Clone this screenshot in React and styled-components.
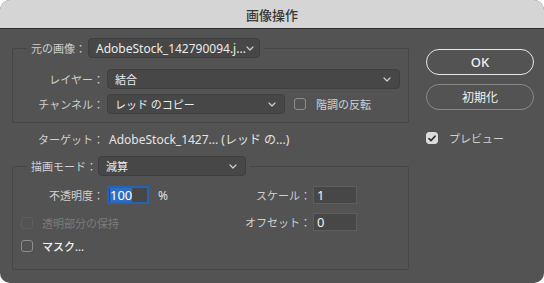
import React from "react";
import styled, { createGlobalStyle } from "styled-components";

const Global = createGlobalStyle`
  html, body { margin: 0; padding: 0; background: #ffffff; }
  * { box-sizing: border-box; }
`;

const FONT = `"Noto Sans", "Noto Sans CJK JP", sans-serif`;

const Window = styled.div`
  width: 544px;
  height: 283px;
  border-radius: 10px;
  overflow: hidden;
  background: #535353;
  display: flex;
  flex-direction: column;
  font-family: ${FONT};
  font-size: 11px;
  color: #d2d2d2;
`;

const TitleBar = styled.div`
  height: 29px;
  flex: none;
  background: #d5d5d5;
  border-bottom: 1px solid #2f2f2f;
  display: flex;
  align-items: center;
  justify-content: center;
  color: #383838;
  font-size: 13px;
  font-weight: 500;
`;

const Body = styled.div`
  flex: 1;
  display: flex;
  gap: 17px;
  padding: 0 10px 0 12px;
`;

const LeftCol = styled.div`
  width: 397px;
  display: flex;
  flex-direction: column;
`;

const Group = styled.fieldset`
  margin: ${(p) => p.$mt}px 0 0 0;
  border: 1px solid #464646;
  border-radius: 2px;
  padding: ${(p) => p.$pad};
  min-width: 0;
`;

const Legend = styled.legend`
  margin-left: ${(p) => p.$ml}px;
  padding: 0 4px;
`;

const LegendInner = styled.div`
  display: flex;
  align-items: center;
  gap: ${(p) => p.$gap}px;
  height: 20px;
`;

const Label = styled.span`
  color: #d0d0d0;
  white-space: nowrap;
  text-align: ${(p) => p.$align || "left"};
  width: ${(p) => (p.$w ? `${p.$w}px` : "auto")};
  flex: none;
`;

const Select = styled.div`
  width: ${(p) => (p.$w ? `${p.$w}px` : "auto")};
  flex: ${(p) => (p.$w ? "none" : "1")};
  height: 20px;
  background: #474747;
  border: 1px solid #3f3f3f;
  border-radius: 4px;
  display: flex;
  align-items: center;
  justify-content: space-between;
  padding: 0 8px 0 7px;
  color: #ececec;
  font-size: ${(p) => p.$fs || 11}px;
  white-space: nowrap;
  overflow: hidden;
`;

const Chevron = () => (
  <svg width="8" height="5" viewBox="0 0 8 5" style={{ flex: "none" }}>
    <polyline points="1,1 4,4 7,1" fill="none" stroke="#cfcfcf" strokeWidth="1.2" strokeLinecap="round" strokeLinejoin="round" />
  </svg>
);

const FormGrid = styled.div`
  display: grid;
  grid-template-columns: 69px 1fr;
  column-gap: 3px;
  row-gap: 5px;
  align-items: center;
`;

const InlineRow = styled.div`
  display: flex;
  align-items: center;
  margin-left: ${(p) => p.$ml || 0}px;
  margin-top: ${(p) => p.$mt || 0}px;
`;

const Box = styled.span`
  width: 12px;
  height: 12px;
  flex: none;
  border-radius: 3px;
  border: 1px solid ${(p) => (p.$checked ? "#dcdcdc" : p.$disabled ? "#5f5f5f" : "#8e8e8e")};
  background: ${(p) => (p.$checked ? "#dcdcdc" : "transparent")};
  display: flex;
  align-items: center;
  justify-content: center;
  margin-right: ${(p) => p.$mr}px;
`;

const CheckLabel = styled.span`
  color: ${(p) => (p.$disabled ? "#7c7c7c" : p.$strong ? "#f0f0f0" : "#d0d0d0")};
  font-weight: ${(p) => (p.$strong ? 500 : 400)};
  white-space: nowrap;
`;

const Check = ({ checked, disabled, label, mr = 10, strong }) => (
  <InlineRow>
    <Box $checked={checked} $disabled={disabled} $mr={mr}>
      {checked && (
        <svg width="8" height="7" viewBox="0 0 8 7">
          <polyline points="1,3.6 3,5.6 7,1.2" fill="none" stroke="#2e2e2e" strokeWidth="1.6" strokeLinecap="round" strokeLinejoin="round" />
        </svg>
      )}
    </Box>
    <CheckLabel $disabled={disabled} $strong={strong}>{label}</CheckLabel>
  </InlineRow>
);

const TargetRow = styled.div`
  margin-top: 10px;
  padding-left: 23px;
  display: grid;
  grid-template-columns: 69px 1fr;
  column-gap: 5px;
  line-height: 14px;
  height: 14px;
`;

const Value = styled.span`
  color: #e4e4e4;
  font-size: 12px;
  white-space: nowrap;
`;

const Columns = styled.div`
  display: flex;
`;

const Column = styled.div`
  width: ${(p) => p.$w}px;
  display: flex;
  flex-direction: column;
  gap: ${(p) => p.$gap}px;
`;

const FieldRow = styled.div`
  display: flex;
  align-items: center;
  height: ${(p) => p.$h || 18}px;
  gap: ${(p) => p.$gap ?? 3}px;
  margin-top: ${(p) => p.$mt || 0}px;
`;

const NumInput = styled.div`
  width: ${(p) => p.$w}px;
  height: 18px;
  flex: none;
  background: #474747;
  border: ${(p) => (p.$focus ? "2px solid #2763b4" : "1px solid #5e5e5e")};
  display: flex;
  align-items: center;
  padding-left: ${(p) => (p.$focus ? 1 : 3)}px;
  color: #f2f2f2;
  font-size: 13px;
`;

const Selected = styled.span`
  background: #2f6cc4;
  color: #ffffff;
  line-height: 14px;
`;

const Unit = styled.span`
  margin-left: 6px;
  color: #e0e0e0;
  font-size: 12px;
`;

const RightCol = styled.div`
  width: 108px;
  padding-top: 20px;
  display: flex;
  flex-direction: column;
`;

const Button = styled.div`
  height: 26px;
  border-radius: 13px;
  border: ${(p) => (p.$primary ? "1.5px solid #e8e8e8" : "1px solid #8a8a8a")};
  display: flex;
  align-items: center;
  justify-content: center;
  color: #f0f0f0;
  font-size: ${(p) => (p.$primary ? 13 : 12)}px;
  font-weight: ${(p) => (p.$primary ? 500 : 400)};
  margin-bottom: ${(p) => p.$mb || 0}px;
`;

export default function App() {
  return (
    <>
      <Global />
      <Window>
        <TitleBar>画像操作</TitleBar>
        <Body>
          <LeftCol>
            <Group $mt={9} $pad="11px 8px 8px 22px">
              <Legend $ml={-8}>
                <LegendInner $gap={2}>
                  <Label>元の画像：</Label>
                  <Select $w={172} $fs={12}>
                    <span>AdobeStock_142790094.j...</span>
                    <Chevron />
                  </Select>
                </LegendInner>
              </Legend>
              <FormGrid>
                <Label $align="right">レイヤー：</Label>
                <Select>
                  <span>結合</span>
                  <Chevron />
                </Select>
                <Label $align="right">チャンネル：</Label>
                <InlineRow>
                  <Select $w={178}>
                    <span>レッド のコピー</span>
                    <Chevron />
                  </Select>
                  <InlineRow $ml={9}>
                    <Check label="階調の反転" mr={10} />
                  </InlineRow>
                </InlineRow>
              </FormGrid>
            </Group>

            <TargetRow>
              <Label $align="right">ターゲット：</Label>
              <Value>AdobeStock_1427... (レッド の...)</Value>
            </TargetRow>

            <Group $mt={9} $pad="10px 8px 16px 8px">
              <Legend $ml={6}>
                <LegendInner $gap={1}>
                  <Label>描画モード：</Label>
                  <Select $w={148}>
                    <span>減算</span>
                    <Chevron />
                  </Select>
                </LegendInner>
              </Legend>
              <Columns>
                <Column $w={219} $gap={0}>
                  <FieldRow>
                    <Label $w={83} $align="right">不透明度：</Label>
                    <NumInput $w={42} $focus>
                      <Selected>100</Selected>
                    </NumInput>
                    <Unit>%</Unit>
                  </FieldRow>
                  <FieldRow $h={14} $mt={12}>
                    <Check label="透明部分の保持" disabled mr={9} />
                  </FieldRow>
                  <FieldRow $h={14} $mt={9}>
                    <Check label="マスク..." mr={9} strong />
                  </FieldRow>
                </Column>
                <Column $w={140} $gap={9}>
                  <FieldRow $gap={2}>
                    <Label $w={71} $align="right">スケール：</Label>
                    <NumInput $w={44}>1</NumInput>
                  </FieldRow>
                  <FieldRow $gap={2}>
                    <Label $w={71} $align="right">オフセット：</Label>
                    <NumInput $w={44}>0</NumInput>
                  </FieldRow>
                </Column>
              </Columns>
            </Group>
          </LeftCol>

          <RightCol>
            <Button $primary $mb={9}>OK</Button>
            <Button>初期化</Button>
            <InlineRow $mt={20}>
              <Check label="プレビュー" checked mr={11} />
            </InlineRow>
          </RightCol>
        </Body>
      </Window>
    </>
  );
}
